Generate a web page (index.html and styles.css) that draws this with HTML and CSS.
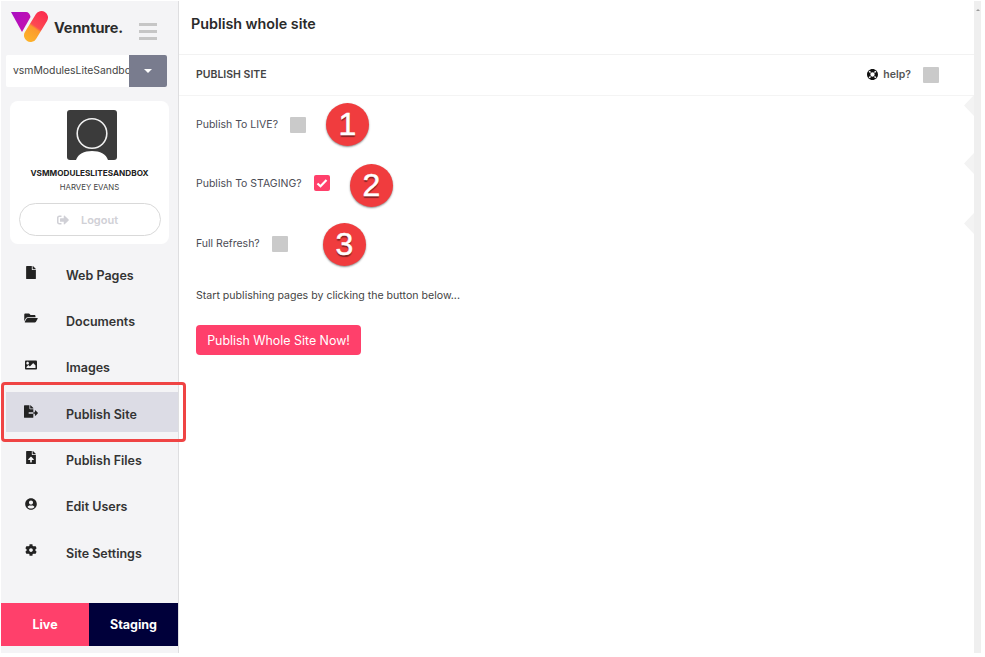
FILE: index.html
```html
<!DOCTYPE html>
<html lang="en">
<head>
<meta charset="utf-8">
<title>Publish whole site</title>
<link rel="stylesheet" href="styles.css">
</head>
<body>
<div class="app">
  <aside class="sidebar">
    <div class="brand">
      <svg class="logo" viewBox="0 0 40 36" width="40" height="36">
        <defs>
          <linearGradient id="lg1" x1="0" y1="0" x2="1" y2="0.5"><stop offset="0" stop-color="#a80fc4"/><stop offset="1" stop-color="#c40fb0"/></linearGradient>
          <linearGradient id="lg2" gradientUnits="userSpaceOnUse" x1="17" y1="31" x2="35" y2="5"><stop offset="0" stop-color="#fdb32a"/><stop offset="0.46" stop-color="#fb9a2c"/><stop offset="0.54" stop-color="#fd4a52"/><stop offset="1" stop-color="#fb2f4f"/></linearGradient>
        </defs>
        <path d="M1 2H16C18.500 2 20 4 20.500 7L12 22Z" fill="url(#lg1)"/>
        <line x1="20.500" y1="25.500" x2="31.500" y2="7.500" stroke="url(#lg2)" stroke-width="13" stroke-linecap="round"/>
      </svg>
      <span class="brand-name">Vennture.</span>
      <span class="burger"><i></i><i></i><i></i></span>
    </div>
    <div class="site-select">
      <span class="site-name">vsmModulesLiteSandbox</span>
      <span class="site-caret"><b></b></span>
    </div>
    <section class="profile">
      <svg class="avatar" viewBox="0 0 50 50" width="50" height="50">
        <rect width="50" height="50" rx="3" fill="#3b3b3b"/>
        <circle cx="25" cy="23.500" r="14.800" fill="none" stroke="#f1f1f1" stroke-width="1.600"/>
        <path d="M9 50C11 44 17 41 25 41S39 44 41 50Z" fill="#fff"/>
      </svg>
      <div class="profile-site">VSMMODULESLITESANDBOX</div>
      <div class="profile-user">HARVEY EVANS</div>
      <div class="logout">
        <svg class="logout-icon" viewBox="0 0 512 512" width="12" height="12"><path d="M497 273L329 441c-15 15-41 4.500-41-17v-96H152c-13.300 0-24-10.700-24-24v-96c0-13.300 10.700-24 24-24h136V88c0-21.400 25.900-32 41-17l168 168c9.300 9.400 9.300 24.600 0 34zM192 436v-40c0-6.600-5.400-12-12-12H96c-17.700 0-32-14.300-32-32V160c0-17.700 14.300-32 32-32h84c6.600 0 12-5.400 12-12V76c0-6.600-5.400-12-12-12H96c-53 0-96 43-96 96v192c0 53 43 96 96 96h84c6.600 0 12-5.400 12-12z"/></svg>
        <span>Logout</span>
      </div>
    </section>
    <nav class="nav">
      <a class="nav-item"><span class="nav-icon"><svg viewBox="0 0 384 512" width="10" height="13"><path d="M224 136V0H24C10.700 0 0 10.700 0 24v464c0 13.300 10.700 24 24 24h336c13.300 0 24-10.700 24-24V160H248c-13.200 0-24-10.800-24-24zm160-14.100v6.100H256V0h6.100c6.400 0 12.500 2.500 17 7l97.900 98c4.500 4.500 7 10.600 7 16.900z"/></svg></span><span>Web Pages</span></a>
      <a class="nav-item"><span class="nav-icon"><svg viewBox="0 0 576 512" width="14" height="12"><path d="M572.694 292.093L500.270 416.248A63.997 63.997 0 0 1 444.989 448H45.025c-18.523 0-30.064-20.093-20.731-36.093l72.424-124.155A64 64 0 0 1 152 256h399.964c18.523 0 30.064 20.093 20.730 36.093zM152 224h328v-48c0-26.510-21.490-48-48-48H272l-64-64H48C21.490 64 0 85.490 0 112v278.046l69.077-118.418C86.214 242.250 117.989 224 152 224z"/></svg></span><span>Documents</span></a>
      <a class="nav-item"><span class="nav-icon"><svg viewBox="0 0 512 512" width="12" height="12"><path d="M464 448H48c-26.510 0-48-21.490-48-48V112c0-26.510 21.490-48 48-48h416c26.510 0 48 21.490 48 48v288c0 26.510-21.490 48-48 48zM112 120c-30.928 0-56 25.072-56 56s25.072 56 56 56 56-25.072 56-56-25.072-56-56-56zM64 384h384V272l-87.515-87.515c-4.686-4.686-12.284-4.686-16.971 0L208 320l-55.515-55.515c-4.686-4.686-12.284-4.686-16.971 0L64 336v48z"/></svg></span><span>Images</span></a>
      <a class="nav-item is-active"><span class="nav-icon"><svg viewBox="0 0 576 512" width="14" height="13"><path d="M384 121.900c0-6.300-2.500-12.400-7-16.900L279.100 7c-4.500-4.500-10.600-7-17-7H256v128h128zM571 308l-95.700-96.400c-10.100-10.100-27.400-3-27.400 11.300V288h-64v64h64v65.200c0 14.300 17.300 21.400 27.400 11.300L571 332c6.600-6.600 6.600-17.400 0-24zm-379 28v-32c0-8.800 7.200-16 16-16h176V160H248c-13.200 0-24-10.800-24-24V0H24C10.700 0 0 10.700 0 24v464c0 13.300 10.700 24 24 24h336c13.300 0 24-10.700 24-24V352H208c-8.800 0-16-7.200-16-16z"/></svg></span><span>Publish Site</span></a>
      <a class="nav-item"><span class="nav-icon"><svg viewBox="0 0 384 512" width="10" height="13"><path d="M224 136V0H24C10.700 0 0 10.700 0 24v464c0 13.300 10.700 24 24 24h336c13.300 0 24-10.700 24-24V160H248c-13.200 0-24-10.800-24-24zm65.180 216.010H224v80c0 8.840-7.160 16-16 16h-32c-8.840 0-16-7.160-16-16v-80H94.820c-14.280 0-21.410-17.290-11.270-27.360l96.420-95.700c6.650-6.610 17.390-6.610 24.040 0l96.420 95.700c10.150 10.070 3.030 27.360-11.250 27.360zM377 105L279.100 7c-4.500-4.500-10.600-7-17-7H256v128h128v-6.100c0-6.300-2.500-12.400-7-16.900z"/></svg></span><span>Publish Files</span></a>
      <a class="nav-item"><span class="nav-icon"><svg viewBox="0 0 496 512" width="12" height="12"><path d="M248 8C111 8 0 119 0 256s111 248 248 248 248-111 248-248S385 8 248 8zm0 96c48.600 0 88 39.400 88 88s-39.400 88-88 88-88-39.400-88-88 39.400-88 88-88zm0 344c-58.700 0-111.300-26.600-146.500-68.200 18.800-35.400 55.600-59.800 98.500-59.800 2.400 0 4.800.4 7.100 1.100 13 4.200 26.600 6.900 40.900 6.900 14.300 0 28-2.700 40.900-6.900 2.300-.7 4.700-1.100 7.100-1.100 42.900 0 79.700 24.400 98.500 59.800C359.300 421.400 306.700 448 248 448z"/></svg></span><span>Edit Users</span></a>
      <a class="nav-item"><span class="nav-icon"><svg viewBox="0 0 512 512" width="12" height="12"><path d="M487.400 315.700l-42.600-24.600c4.300-23.200 4.300-47 0-70.200l42.600-24.600c4.900-2.800 7.100-8.600 5.500-14-11.100-35.600-30-67.800-54.700-94.600-3.800-4.100-10-5.100-14.800-2.300L380.800 110c-17.900-15.400-38.500-27.300-60.800-35.100V25.800c0-5.600-3.900-10.500-9.400-11.700-36.700-8.200-74.300-7.800-109.200 0-5.500 1.200-9.400 6.100-9.400 11.700V75c-22.200 7.900-42.800 19.800-60.800 35.100L88.700 85.500c-4.900-2.800-11-1.900-14.800 2.300-24.700 26.700-43.600 58.900-54.700 94.600-1.700 5.400.6 11.200 5.500 14L67.300 221c-4.300 23.200-4.300 47 0 70.200l-42.600 24.600c-4.900 2.800-7.100 8.600-5.500 14 11.100 35.600 30 67.800 54.700 94.600 3.800 4.100 10 5.100 14.800 2.300l42.600-24.600c17.900 15.400 38.500 27.300 60.800 35.100v49.200c0 5.600 3.900 10.500 9.400 11.700 36.700 8.200 74.300 7.800 109.200 0 5.500-1.200 9.400-6.100 9.400-11.700v-49.200c22.200-7.900 42.800-19.800 60.800-35.100l42.600 24.600c4.900 2.800 11 1.900 14.800-2.300 24.700-26.700 43.600-58.900 54.700-94.600 1.500-5.500-.7-11.300-5.600-14.100zM256 336c-44.100 0-80-35.900-80-80s35.900-80 80-80 80 35.900 80 80-35.900 80-80 80z"/></svg></span><span>Site Settings</span></a>
    </nav>
    <div class="env">
      <span class="env-tab env-live">Live</span>
      <span class="env-tab env-staging">Staging</span>
    </div>
    <div class="callout"></div>
  </aside>
  <main class="main">
    <header class="page-head"><h1>Publish whole site</h1></header>
    <div class="section-head">
      <h2>PUBLISH SITE</h2>
      <div class="help">
        <svg viewBox="8 8 496 496" width="11" height="11"><path d="M256 8C119 8 8 119 8 256s111 248 248 248 248-111 248-248S393 8 256 8zm173.696 119.559l-63.399 63.399c-10.987-18.559-26.670-34.252-45.255-45.255l63.399-63.399a218.396 218.396 0 0 1 45.255 45.255zM256 352c-53.019 0-96-42.981-96-96s42.981-96 96-96 96 42.981 96 96-42.981 96-96 96zM127.559 82.304l63.399 63.399c-18.559 10.987-34.252 26.670-45.255 45.255l-63.399-63.399a218.372 218.372 0 0 1 45.255-45.255zM82.304 384.441l63.399-63.399c10.987 18.559 26.670 34.252 45.255 45.255l-63.399 63.399a218.396 218.396 0 0 1-45.255-45.255zm302.137 45.255l-63.399-63.399c18.559-10.987 34.252-26.670 45.255-45.255l63.399 63.399a218.429 218.429 0 0 1-45.255 45.255z"/></svg>
        <span>help?</span>
        <span class="box help-box"></span>
      </div>
    </div>
    <div class="form">
      <div class="row row-live"><span>Publish To LIVE?</span><span class="box"></span></div>
      <div class="row row-staging"><span>Publish To STAGING?</span><span class="box box-on"><svg viewBox="0 0 16 16" width="16" height="16"><path d="M3.500 8.500L6.500 11.300L12.500 5" fill="none" stroke="#fff" stroke-width="2.200"/></svg></span></div>
      <div class="row row-full"><span>Full Refresh?</span><span class="box"></span></div>
      <p class="hint">Start publishing pages by clicking the button below...</p>
      <button class="publish" type="button">Publish Whole Site Now!</button>
    </div>
    <span class="badge badge-1">1</span>
    <span class="badge badge-2">2</span>
    <span class="badge badge-3">3</span>
    <i class="notch notch-1"></i>
    <i class="notch notch-2"></i>
    <i class="notch notch-3"></i>
  </main>
  <div class="scrollbar"></div>
</div>
</body>
</html>
```

FILE: styles.css
```css
* { box-sizing: border-box; }
html, body { margin: 0; height: 100%; background: #fff; overflow: hidden; }
body { font-family: Inter, "Liberation Sans", sans-serif; color: #333; }

.app { display: flex; width: 981px; height: 652px; margin-top: 1px; padding-left: 1px; }

/* Sidebar */
.sidebar { position: relative; z-index: 1; flex: none; width: 178px; background: #f4f4f6; border-right: 1px solid #dedee0; display: flex; flex-direction: column; }
.brand { display: flex; align-items: flex-start; height: 54px; padding: 9px 0 0 9px; }
.logo { flex: none; }
.brand-name { margin: 8px 0 0 4px; width: 86px; font-size: 14.500px; font-weight: 700; color: #2b2b2b; letter-spacing: -0.100px; line-height: 20px; }
.burger { display: flex; flex-direction: column; gap: 4.500px; margin-top: 13px; width: 18px; flex: none; transform: translateX(-1px); }
.burger i { height: 2.500px; background: #c6c6c6; }

.site-select { display: flex; height: 32px; margin-left: 5px; width: 161px; background: #fff; border-radius: 2px; overflow: hidden; font-size: 10.400px; }
.site-name { flex: none; width: 123px; padding: 0 0 0 7px; line-height: 31px; white-space: nowrap; overflow: hidden; color: #444; }
.site-caret { flex: none; width: 38px; background: #797c8e; display: flex; align-items: center; justify-content: center; }
.site-caret b { width: 0; height: 0; border-style: solid; border-width: 4px 4.500px 0; border-color: #fff transparent transparent; }

.profile { margin: 14px 0 0 9px; width: 159px; height: 143px; background: #fff; border-radius: 8px; display: flex; flex-direction: column; align-items: center; padding-top: 9px; }
.avatar { display: block; margin-left: 4px; }
.profile-site { margin-top: 7px; font-size: 8.200px; line-height: 12px; font-weight: 700; color: #222; white-space: nowrap; }
.profile-user { margin-top: 2px; font-size: 7.800px; line-height: 12px; color: #444; }
.logout { margin-top: 10px; width: 142px; height: 33px; border: 1px solid #d9d9d9; border-radius: 17px; display: flex; align-items: center; justify-content: center; gap: 12px; font-size: 11px; font-weight: 600; color: #d0d0d6; padding-right: 4px; }
.logout-icon { fill: #d0d0d6; }

.nav { display: flex; flex-direction: column; padding-top: 8px; }
.nav-item { display: flex; height: 46.330px; align-items: center; font-size: 12.500px; font-weight: 600; color: #333; padding-left: 5px; }
.nav-icon { flex: none; width: 50px; margin-right: 10px; height: 14px; display: flex; align-items: center; justify-content: center; transform: translateY(-3px); }
.nav-icon svg { display: block; fill: #222; }
.nav-item.is-active { position: relative; }
.nav-item.is-active::before { content: ""; position: absolute; left: 5px; right: 0; top: 1px; bottom: 5px; background: #dcdce5; }
.nav-item.is-active > * { position: relative; }

.env { margin-top: auto; margin-bottom: 7px; display: flex; height: 43px; font-size: 12.500px; font-weight: 700; color: #fff; }
.env-tab { display: flex; align-items: center; justify-content: center; }
.env-live { flex: none; width: 88px; background: #ff406b; }
.env-staging { flex: 1; background: #00003a; }

.callout { position: absolute; left: 0; top: 381px; width: 185px; height: 60px; border: 3.500px solid #ef4444; border-radius: 4px; pointer-events: none; }

/* Main */
.main { position: relative; flex: 1; min-width: 0; background: #fff; }
.page-head { height: 54px; padding: 13px 0 0 12px; border-bottom: 1px solid #f2f2f2; }
.page-head h1 { margin: 0; font-size: 14.300px; line-height: 20px; font-weight: 600; color: #2a2a2a; }
.section-head { display: flex; height: 41px; align-items: center; justify-content: space-between; padding: 0 35px 1px 17px; border-bottom: 1px solid #f4f4f4; }
.section-head h2 { margin: 0; font-size: 10.500px; font-weight: 600; color: #444; }
.help { display: flex; align-items: center; font-size: 10.500px; font-weight: 600; color: #555; }
.help svg { fill: #111; margin-right: 5px; }
.box { display: block; flex: none; width: 16px; height: 16px; border-radius: 1px; background: #cacaca; }
.help-box { margin-left: 12px; }
.box-on { background: #ff406b; border-radius: 2px; }
.box-on svg { display: block; }

.form { padding: 0 0 0 17px; }
.row { display: flex; align-items: center; gap: 12px; font-size: 10.500px; color: #4b4b55; }
.row-live { height: 56px; padding-top: 1px; }
.row-staging { height: 60px; padding-top: 2px; }
.row-full { height: 60px; padding-top: 3px; }
.hint { margin: 17px 0 0; font-size: 10.600px; line-height: 14px; color: #444; }
.publish { display: block; margin-top: 22px; width: 165px; height: 30px; padding: 0; border: 0; border-radius: 4px; background: #ff406b; color: #fff; font: 400 12.400px Inter, "Liberation Sans", sans-serif; }

.badge { position: absolute; width: 43px; height: 43px; border-radius: 50%; background: #f03c3e; color: #fff; font: 400 32px/43px "Liberation Sans", sans-serif; text-align: center; -webkit-text-stroke: 0.500px #fff; box-shadow: 0 1px 2px rgba(0,0,0,0.450); text-shadow: 0 1.500px 1px rgba(0,0,0,0.450); }
.badge-1 { left: 147px; top: 102px; }
.badge-2 { left: 171px; top: 163px; }
.badge-3 { left: 144px; top: 222px; }

.notch { position: absolute; right: 0; width: 10px; height: 21px; background: #f3f3f3; clip-path: polygon(100% 0, 0 50%, 100% 100%); }
.notch-1 { top: 94px; }
.notch-2 { top: 152px; }
.notch-3 { top: 212px; }

.scrollbar { position: relative; flex: none; width: 7px; background: #efefef; }
.scrollbar::before { content: ""; position: absolute; left: 2px; top: 8px; border-style: solid; border-width: 0 2px 2px; border-color: transparent transparent #9a9a9a; }
```
